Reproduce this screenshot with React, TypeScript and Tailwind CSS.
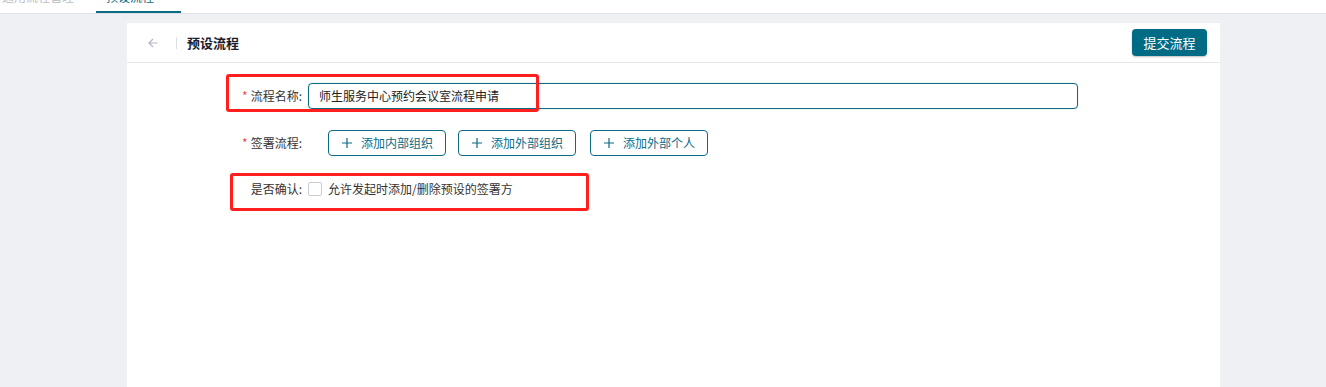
import React from "react";

const font = { fontFamily: '"Noto Sans CJK SC", "Noto Sans", sans-serif' };

function Plus() {
  return (
    <svg width="12" height="12" viewBox="0 0 12 12" className="shrink-0">
      <path d="M6 1v10M1 6h10" stroke="currentColor" strokeWidth="1.2" fill="none" />
    </svg>
  );
}

function AddBtn({ label, extra = "" }: { label: string; extra?: string }) {
  return (
    <button className={"h-[26px] w-[118px] justify-center flex items-center gap-[8px] border border-[#0b6b84] rounded-[4px] text-[#0b6b84] text-[12px] bg-white " + extra}>
      <Plus />
      <span>{label}</span>
    </button>
  );
}

export default function App() {
  return (
    <div className="w-[1326px] h-[387px] overflow-hidden bg-[#eff0f4] relative" style={font}>
      {/* top tabs bar */}
      <div className="h-[14px] bg-white border-b border-[#dfe1e6] overflow-hidden flex">
        <div className="w-[96px] text-[12px] text-[#b9bcc4] leading-[14px] -mt-[10px] pl-[2px]">通用流程管理</div>
        <div className="w-[85px] h-[13px] border-b-2 border-[#0b6b84] flex">
          <div className="text-[12px] text-[#0b6b84] leading-[14px] -mt-[10px] pl-[10px] flex gap-[6px]">
            <span>预设流程</span>
            <span className="text-[#8fb6e0] text-[10px]">✕</span>
          </div>
        </div>
      </div>

      {/* card */}
      <div className="ml-[127px] mt-[9px] w-[1093px] h-[400px] bg-white">
        {/* header */}
        <div className="h-[40px] border-b border-[#e6e8eb] flex items-center pl-[20px] pr-[13px]">
          <svg width="12" height="12" viewBox="0 0 12 12" className="text-[#b3b6c2]">
            <path d="M10.5 6H2M6 2L2 6l4 4" stroke="currentColor" strokeWidth="1.2" fill="none" />
          </svg>
          <div className="ml-[17px] w-px h-[12px] bg-[#dcdfe4]" />
          <div className="ml-[10px] text-[13px] font-bold text-[#1b1d2b]">预设流程</div>
          <div className="flex-1" />
          <button className="h-[27px] w-[75px] rounded-[4px] bg-[#006b84] text-white text-[13px] shadow-[0_1px_2px_rgba(0,0,0,0.25)]">
            提交流程
          </button>
        </div>

        {/* form */}
        <div className="pt-[20px] flex flex-col">
          <div className="flex items-center h-[26px]">
            <div className="w-[181px] text-right text-[12px] text-[#333] pr-[6px]">
              <span className="text-[#f24a4a] mr-[3px]">*</span>流程名称:
            </div>
            <div className="w-[770px] h-[26px] border border-[#0f6b84] rounded-[4px] shadow-[0_0_1px_rgba(15,107,132,0.6)] flex items-center pl-[10px] text-[12px] text-[#222]">
              师生服务中心预约会议室流程申请
            </div>
          </div>

          <div className="flex items-center h-[26px] mt-[21px]">
            <div className="w-[181px] text-right text-[12px] text-[#333] pr-[6px]">
              <span className="text-[#f24a4a] mr-[3px]">*</span>签署流程:
            </div>
            <div className="ml-[20px] flex gap-[12px]">
              <AddBtn label="添加内部组织" />
              <AddBtn label="添加外部组织" />
              <AddBtn label="添加外部个人" extra="ml-[2px]" />
            </div>
          </div>

          <div className="flex items-center h-[20px] mt-[23px]">
            <div className="w-[181px] text-right text-[12px] text-[#333] pr-[6px]">是否确认:</div>
            <div className="w-[14px] h-[14px] border border-[#c8ccd4] rounded-[2px] bg-white" />
            <div className="ml-[6px] text-[12px] text-[#333]">允许发起时添加/删除预设的签署方</div>
          </div>
        </div>
      </div>

      {/* red annotation boxes */}
      <div className="absolute left-[226px] top-[74px] w-[313px] h-[38px] border-[3px] border-[#ff1f1f] rounded-[3px]" />
      <div className="absolute left-[230px] top-[173px] w-[359px] h-[38px] border-[3px] border-[#ff1f1f] rounded-[3px]" />
    </div>
  );
}
